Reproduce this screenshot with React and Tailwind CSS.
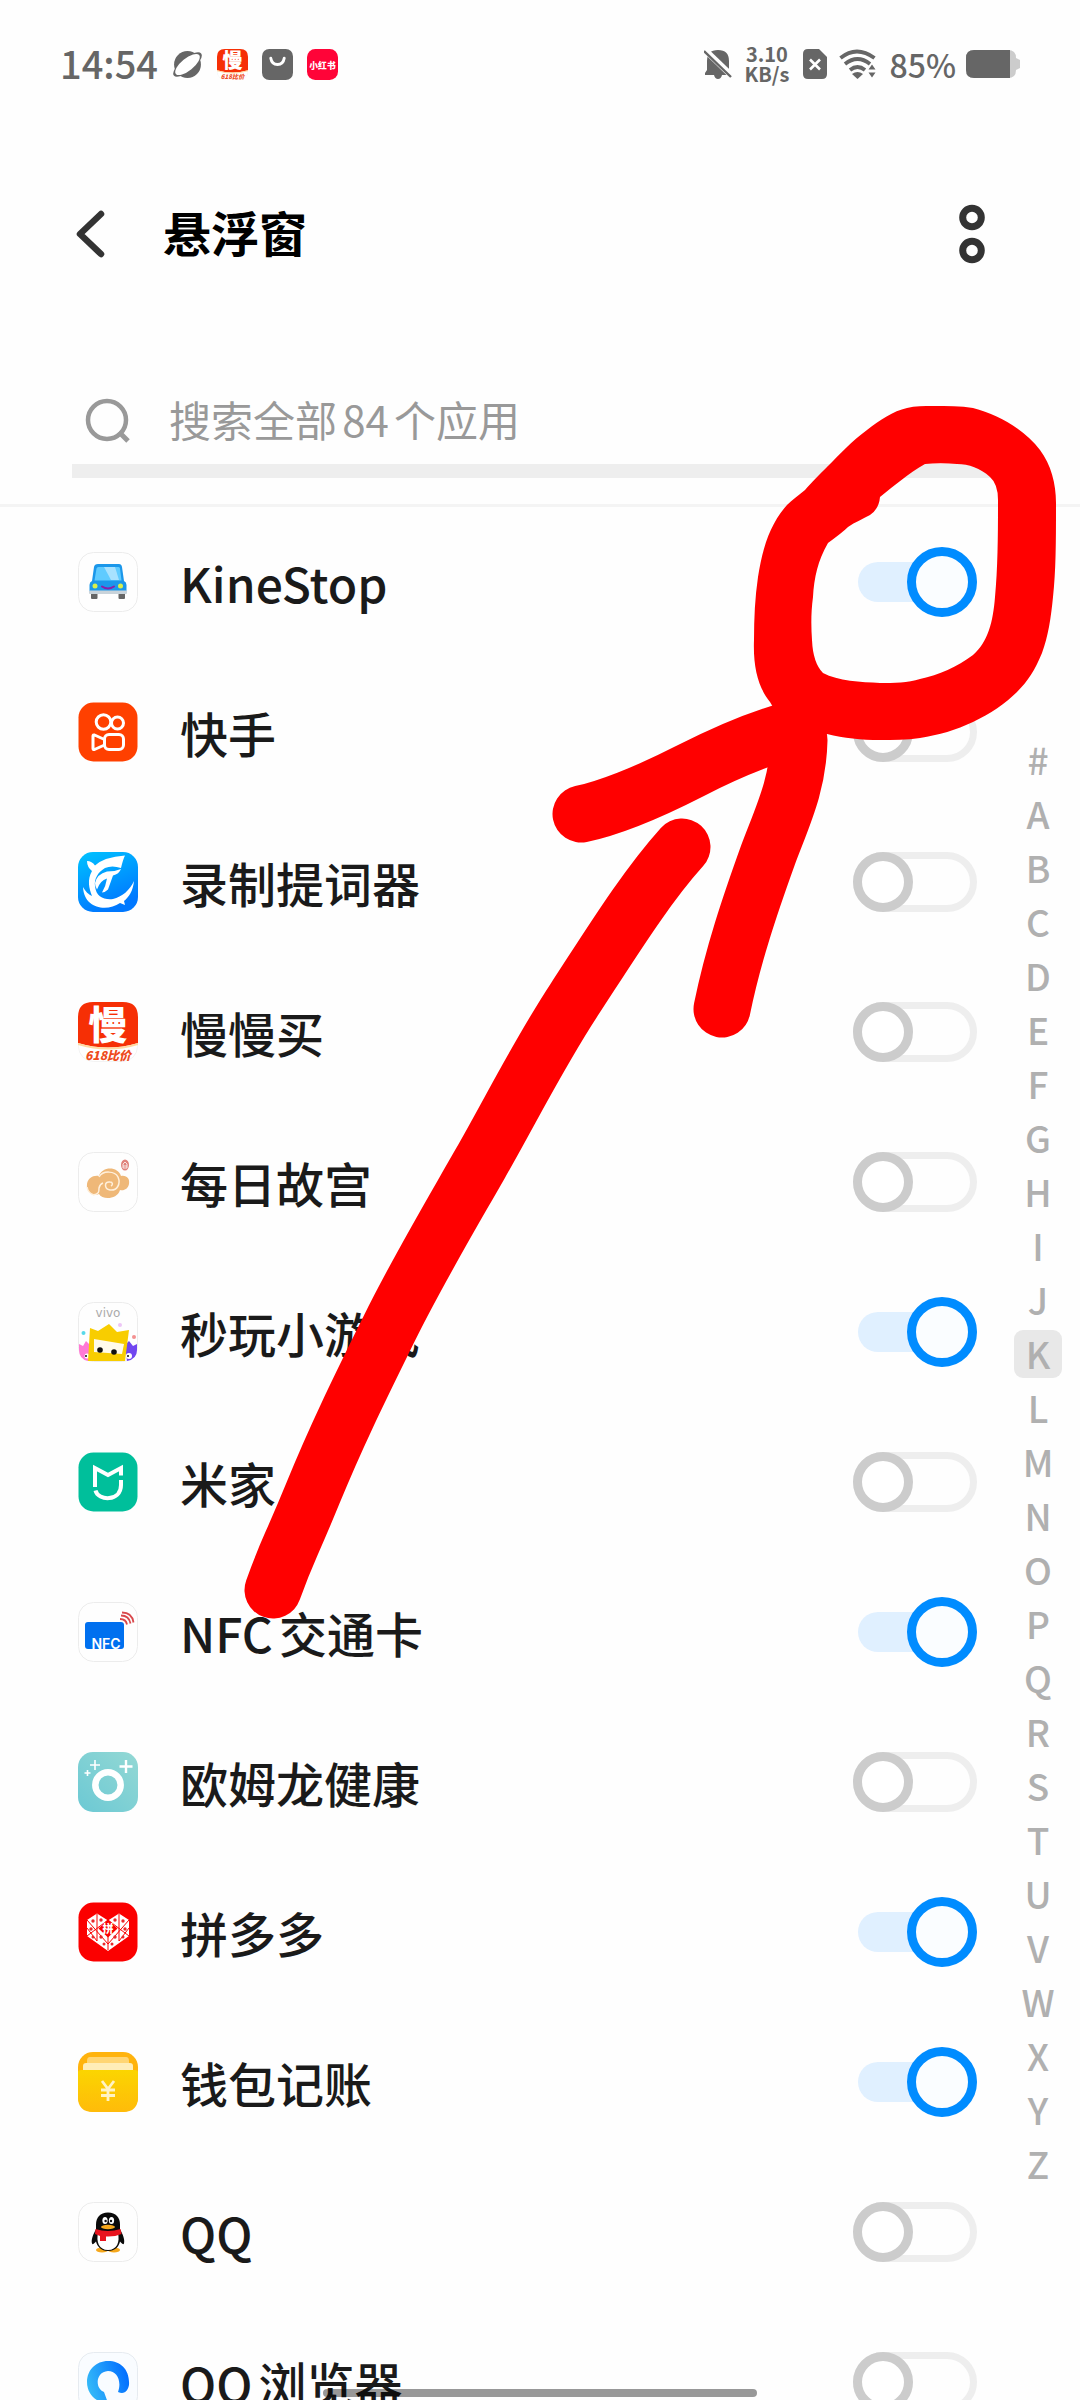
import { useState } from "react";

function Frame({ fill = "#fefefe", plain = true, children }) {
  return (
    <svg viewBox="0 0 60 60" className="size-[60px] shrink-0" aria-hidden="true">
      <rect x="0.5" y="0.5" width="59" height="59" rx="15" fill={fill} stroke={plain ? "#ececec" : "none"} />
      {children}
    </svg>
  );
}

function KineStopIcon() {
  return (
    <Frame>
      <rect x="13" y="41" width="6.5" height="6" rx="1" fill="#666" />
      <rect x="40.5" y="41" width="6.5" height="6" rx="1" fill="#666" />
      <path d="M20 12h21q2.500 0 3 3l2 14q2.500 1 2.500 4v6h-37v-6q0-3 2.500-4l2-14q.500-3 4-3z" fill="#1b97ea" />
      <path d="M20.500 15h20q1.500 0 1.500 1.500l1.500 12h-27l2-12q.200-1.500 2-1.500z" fill="#5fcbff" />
      <path d="M26 15h11l4 13h-8z" fill="#a8e2ff" />
      <rect x="11" y="38.5" width="38" height="3.5" rx="1" fill="#c9d3da" />
      <circle cx="17" cy="34" r="2.5" fill="#d8f04c" />
      <circle cx="42.5" cy="34" r="2.5" fill="#d8f04c" />
      <path d="M24 34.500q6 4 12 0" fill="none" stroke="#8b1fa8" strokeWidth="2" strokeLinecap="round" />
    </Frame>
  );
}

function KuaishouIcon() {
  return (
    <Frame fill="#ff4000" plain={false}>
      <g fill="none" stroke="#fff" strokeWidth="3" strokeLinejoin="round">
        <circle cx="25.5" cy="20" r="7.3" />
        <circle cx="39.5" cy="21" r="6" />
        <rect x="26.5" y="32.5" width="19" height="15" rx="4.5" />
        <path d="M26.500 37.500l-10-4.500q-1.500-.300-1.500 1v12.500q0 1.300 1.500 1l10-4.500" />
      </g>
    </Frame>
  );
}

function PrompterIcon() {
  return (
    <svg viewBox="0 0 60 60" className="size-[60px] shrink-0" aria-hidden="true">
      <defs>
        <linearGradient id="prompter" x1="0" y1="0" x2=".4" y2="1">
          <stop offset="0" stopColor="#00c3ff" />
          <stop offset="1" stopColor="#0078ff" />
        </linearGradient>
      </defs>
      <rect width="60" height="60" rx="15" fill="url(#prompter)" />
      <path d="M9 9q5 0 8 4.500Q26 5 47 3.500q-2 4-4 12.500-9-3-16 0c-7 4-11 11-10 18C18 45 26 48 35 47c9-2 17-9 21-18-1 10-5 16-10 20l1 4-5-2c-13 9-36 6-37-16 3 5 5 7 9 9C11 36 9 28 14 19q-5-4-5-10z" fill="#fff" />
      <path d="M17 31q2-9 12-11.500 8 0 14-2.500-2 5-8 6.500l-5 14q-3 3-6 3 4-7 5-14-7 2-10 11-2-3-2-6.500z" fill="#fff" />
    </svg>
  );
}

function ManmanIcon({ small = false }) {
  return (
    <svg viewBox="0 0 60 60" className={small ? "size-[31px] shrink-0" : "size-[60px] shrink-0"} aria-hidden="true">
      <rect x="0.5" y="0.5" width="59" height="59" rx="15" fill="#fff" stroke="#f3f3f3" />
      <path d="M15 0h30q15 0 15 15v26q-30 9-60 0V15Q0 0 15 0z" fill="#f62f05" />
      <path d="M0 41q30 9 60 0v2q-30 9-60 0z" fill="#ffd9a0" />
      <text x="30" y="37" textAnchor="middle" fontSize="39" fontWeight="900" fill="#fff">慢</text>
      <text x="30" y="58" textAnchor="middle" fontSize="12" fontWeight="900" fontStyle="italic" fill="#ee4b1c">618比价</text>
    </svg>
  );
}

function PalaceIcon() {
  return (
    <Frame>
      <path d="M21 24c3-10 19-10 22 0 6-1 9 3 8 8s-5 7-9 6c-3 10-18 10-21 4C14 45 8 40 9 32c1-6 6-9 12-8z" fill="#efb878" />
      <path d="M21 25c4-7 16-6 19 0 3 7-1 14-8 13-6-1-6-9 0-8 3 0 3 3 1 4M15 43c6-1 6-3 6-7q1-4 4-5M9 35q1 6 7 8" fill="none" stroke="#fff0dc" strokeWidth="1.5" />
      <ellipse cx="47" cy="13" rx="4" ry="5.5" fill="#e0827c" />
      <path d="M45 12l2-2 2 2v4h-4zM45 14h4" fill="none" stroke="#fff" strokeWidth=".8" />
    </Frame>
  );
}

function GameIcon() {
  return (
    <Frame>
      <text x="30" y="15" textAnchor="middle" fontSize="12" fontFamily="DejaVu Sans" fill="#aaa">vivo</text>
      <path d="M1 42l4 2 3-5 4 4-2 16Q1 57 1 48z" fill="#ff79d5" />
      <path d="M59 42l-4 2-4-5-4 4 2 16q10-2 10-11z" fill="#7046f0" />
      <circle cx="9" cy="54" r="2.5" fill="#fff" />
      <circle cx="51" cy="54" r="3" fill="#fff" />
      <circle cx="8" cy="54" r="1" fill="#111" />
      <circle cx="50" cy="54" r="1" fill="#111" />
      <path d="M12 26l8 3 11-7 8 8 12-2-4 31H10z" fill="#f8cd00" />
      <path d="M16 37l30 5-2 10-28-2z" fill="#fffbea" />
      <circle cx="22" cy="48" r="2.8" fill="#111" />
      <circle cx="36" cy="50" r="2.8" fill="#111" />
      <circle cx="5.5" cy="31" r="2" fill="#58d9ea" />
      <circle cx="42" cy="23" r="2" fill="#ecc6f6" />
      <circle cx="56" cy="35" r="2" fill="#f49090" />
    </Frame>
  );
}

function MijiaIcon() {
  return (
    <Frame fill="#00bf9b" plain={false}>
      <path d="M17 35V16l13 7 13-7v7.500" fill="none" stroke="#fff" strokeWidth="4" />
      <path d="M17.500 38.500C20 49 43 50 43 33v-5" fill="none" stroke="#fff" strokeWidth="4" />
    </Frame>
  );
}

function NfcIcon() {
  return (
    <Frame>
      <rect x="7" y="20" width="39" height="27" rx="3" fill="#0070ef" />
      <text x="28" y="47" textAnchor="middle" fontSize="14" fontWeight="600" fontFamily="Inter" fill="#fff">NFC</text>
      <path d="M42 17q6 0 7 5.500M43 13.500q8 0 9.500 8M44 10.500q10 0 11.500 10" fill="none" stroke="#d9484c" strokeWidth="1.8" />
    </Frame>
  );
}

function OmronIcon() {
  return (
    <svg viewBox="0 0 60 60" className="size-[60px] shrink-0" aria-hidden="true">
      <defs>
        <linearGradient id="omron" x1="0" y1="1" x2="1" y2="0">
          <stop offset="0" stopColor="#6cc9d4" />
          <stop offset="1" stopColor="#93d8d4" />
        </linearGradient>
      </defs>
      <rect width="60" height="60" rx="15" fill="url(#omron)" />
      <circle cx="30" cy="33" r="12.7" fill="none" stroke="#fff" strokeWidth="6.5" />
      <path d="M48 8v13M41.500 14.500h13" stroke="#fff" strokeWidth="2.4" />
      <path d="M17 8v10M12 13h10M9.500 18v6M6.500 21h6" stroke="#fff" strokeWidth="1.6" />
    </svg>
  );
}

function PinduoduoIcon() {
  return (
    <Frame fill="#fb0000" plain={false}>
      <path d="M19 11.500l11 7 11-7 10 6.500v16L30 49 9 34V18z" fill="#fff" />
      <path d="M19 12v27M41 12v27M9 18l21 24 21-24M9 34l21-16 21 16M30 18v30M9 26l10 13M51 26L41 39" fill="none" stroke="#fb0000" strokeWidth="1" />
      <path d="M30 17.500l9.500 9-9.500 9-9.500-9z" fill="#fb0000" />
      <text x="30" y="31" textAnchor="middle" fontSize="11" fontWeight="900" fill="#fff">拼</text>
      <g fill="#e9282b">
        <circle cx="15" cy="19" r="1.7" />
        <circle cx="23" cy="18" r="1.7" />
        <circle cx="45" cy="19" r="1.7" />
        <circle cx="37" cy="18" r="1.7" />
        <circle cx="13" cy="27" r="1.7" />
        <circle cx="47" cy="27" r="1.7" />
        <circle cx="15" cy="35" r="1.5" />
        <circle cx="45" cy="35" r="1.5" />
        <circle cx="23" cy="35" r="1.7" />
        <circle cx="37" cy="35" r="1.7" />
        <circle cx="26" cy="42" r="1.5" />
        <circle cx="34" cy="42" r="1.5" />
      </g>
    </Frame>
  );
}

function WalletIcon() {
  return (
    <svg viewBox="0 0 60 60" className="size-[60px] shrink-0" aria-hidden="true">
      <defs>
        <linearGradient id="wallet" x1="0" y1="0" x2="0" y2="1">
          <stop offset="0" stopColor="#fbd500" />
          <stop offset="1" stopColor="#ffbb0a" />
        </linearGradient>
      </defs>
      <rect width="60" height="60" rx="15" fill="#ffb30d" />
      <path d="M12 5h36q3 0 3 4v3H9V9q0-4 3-4z" fill="#ffd573" />
      <rect x="5" y="11" width="50" height="14" rx="3" fill="#ffedb8" />
      <path d="M0 20q0-2 4-2h52q4 0 4 2v25q0 15-15 15H15Q0 60 0 45z" fill="url(#wallet)" />
      <path d="M24 29l6 8 6-8M30 37v12M23 38h14M23 43.500h14" fill="none" stroke="#fff3c4" strokeWidth="2.8" />
    </svg>
  );
}

function QQIcon() {
  return (
    <Frame>
      <ellipse cx="24" cy="48" rx="6" ry="2.5" fill="#f6a81c" />
      <ellipse cx="36" cy="48" rx="6" ry="2.5" fill="#f6a81c" />
      <path d="M30 10.500c8 0 12 5 12 12v5c3 5 5 10 4 14-1 2-3-1-4-2-1 5-5 9.500-12 9.500S19 44 18 39.500c-1 1-3 4-4 2-1-4 1-9 4-14v-5c0-7 4-12 12-12z" fill="#0a0a0a" />
      <path d="M20 31h20c2 9-1 17-10 17s-12-8-10-17z" fill="#fff" />
      <ellipse cx="27" cy="18.5" rx="2.6" ry="3.6" fill="#fff" />
      <ellipse cx="33.5" cy="18.5" rx="2.6" ry="3.6" fill="#fff" />
      <circle cx="27.6" cy="19" r="1.2" fill="#111" />
      <circle cx="33" cy="19" r="1.2" fill="#111" />
      <ellipse cx="30" cy="25" rx="7" ry="2.2" fill="#f6a81c" />
      <path d="M17.500 27q12.500 4 25 0l1 5q-7 3-15.500 2.500v4.500h-6v-5l-5-2z" fill="#e8131d" />
    </Frame>
  );
}

function BrowserIcon() {
  return (
    <svg viewBox="0 0 60 60" className="size-[60px] shrink-0" aria-hidden="true">
      <defs>
        <linearGradient id="browser" x1="0" y1=".6" x2="1" y2=".3">
          <stop offset="0" stopColor="#35baf8" />
          <stop offset="1" stopColor="#006cff" />
        </linearGradient>
      </defs>
      <rect x="0.5" y="0.5" width="59" height="59" rx="15" fill="#f9fcff" stroke="#e6ebf0" />
      <path d="M40 40C47 43 50 38 51 33 52 18 43 9 30 9 18 9 9 18 9 30c0 12 9 21 21 21l-4-11c-9-3-9-20 4-21 9 0 14 10 10 21z" fill="url(#browser)" />
    </svg>
  );
}

const APPS = [
  { name: "KineStop", Icon: KineStopIcon, on: true },
  { name: "快手", Icon: KuaishouIcon, on: false },
  { name: "录制提词器", Icon: PrompterIcon, on: false },
  { name: "慢慢买", Icon: ManmanIcon, on: false },
  { name: "每日故宫", Icon: PalaceIcon, on: false },
  { name: "秒玩小游戏", Icon: GameIcon, on: true },
  { name: "米家", Icon: MijiaIcon, on: false },
  { name: "NFC交通卡", Icon: NfcIcon, on: true },
  { name: "欧姆龙健康", Icon: OmronIcon, on: false },
  { name: "拼多多", Icon: PinduoduoIcon, on: true },
  { name: "钱包记账", Icon: WalletIcon, on: true },
  { name: "QQ", Icon: QQIcon, on: false },
  { name: "QQ浏览器", Icon: BrowserIcon, on: false },
];

const LETTERS = "#ABCDEFGHIJKLMNOPQRSTUVWXYZ".split("");

function StatusBar() {
  return (
    <header className="flex h-32 shrink-0 items-center justify-between px-[60px] text-[#666]">
      <div className="flex items-center gap-[14px]">
        <span className="pb-0.5 text-[38px] leading-[56px] font-medium">14:54</span>
        <svg viewBox="0 0 30 30" className="size-[31px]" aria-hidden="true">
          <circle cx="15" cy="15" r="13" fill="#666" />
          <ellipse cx="15" cy="15" rx="17" ry="6.5" transform="rotate(-39 15 15)" fill="#666" />
          <ellipse cx="15" cy="15" rx="14.5" ry="6" transform="rotate(-39 15 15)" fill="#fff" />
        </svg>
        <ManmanIcon small />
        <svg viewBox="0 0 30 30" className="size-[31px]" aria-hidden="true">
          <rect width="30" height="30" rx="7" fill="#666" />
          <path d="M8.500 9q1 6 6.500 6t6.500-6" fill="none" stroke="#fff" strokeWidth="2.8" strokeLinecap="round" />
        </svg>
        <svg viewBox="0 0 30 30" className="size-[31px]" aria-hidden="true">
          <rect width="30" height="30" rx="8" fill="#ff0438" />
          <text x="15" y="19" textAnchor="middle" fontSize="8.5" fontWeight="900" fill="#fff">小红书</text>
        </svg>
      </div>
      <div className="flex items-center">
        <svg viewBox="0 0 28 32" className="mr-3 h-8 w-7" aria-hidden="true">
          <path d="M14 2q11 0 11 11v9l2 3v2h-9q-1 4-4 4t-4-4H1v-2l2-3v-9Q3 2 14 2z" fill="#666" />
          <path d="M0 1l29 28" stroke="#fefefe" strokeWidth="6" />
          <path d="M0 3l27 26" stroke="#666" strokeWidth="2.4" />
        </svg>
        <div className="mr-[14px] flex flex-col text-center text-[20px] leading-5 font-bold">
          <span>3.10</span>
          <span>KB/s</span>
        </div>
        <svg viewBox="0 0 24 30" className="mr-3 h-[30px] w-6" aria-hidden="true">
          <path d="M5 0h11l8 8v17q0 5-5 5H5q-5 0-5-5V5q0-5 5-5z" fill="#666" />
          <path d="M7 10.500l10 10M17 10.500l-10 10" stroke="#fff" strokeWidth="2.6" />
        </svg>
        <svg viewBox="0 0 38 30" className="mr-3 h-[30px] w-[38px]" aria-hidden="true">
          <g fill="none" stroke="#666" strokeWidth="3.8">
            <path d="M1.500 9q16-13 34 0" />
            <path d="M6 15q12.500-10 25 0" />
            <path d="M11 21q7.500-6 15 0" />
          </g>
          <path d="M13 25q5.500-4 11 0l-5.500 5z" fill="#666" />
          <path d="M29.500 20.500h7l-3.500-5zM29.500 23.500h7l-3.500 5z" fill="#666" />
        </svg>
        <span className="mr-[10px] text-[32px] leading-[48px] font-medium">85%</span>
        <svg viewBox="0 0 54 28" className="h-7 w-[54px]" aria-hidden="true">
          <path d="M8 0h34q8 0 8 8l4 2v8l-4 2q0 8-8 8H8q-8 0-8-8V8q0-8 8-8z" fill="#ccc" />
          <path d="M8 0h36v28H8q-8 0-8-8V8q0-8 8-8z" fill="#666" />
        </svg>
      </div>
    </header>
  );
}

function AppRow({ app }) {
  const { Icon } = app;
  return (
    <li>
      <label className="flex h-[150px] items-center">
        <Icon />
        <span className="ml-[42px] flex-1 text-[48px] leading-[56px] font-medium text-[#1a1a1a] [text-autospace:normal]">{app.name}</span>
        <span className="relative flex h-[70px] w-[124px] items-center">
          <input type="checkbox" role="switch" defaultChecked={app.on} className="peer absolute inset-0 m-0 opacity-0" />
          <span className="h-[60px] w-full rounded-full border-[7px] border-[#eee] peer-checked:ml-[5px] peer-checked:h-10 peer-checked:border-0 peer-checked:bg-[#e0f0ff]" />
          <span className="absolute left-0 size-[60px] rounded-full border-[9px] border-[#ccc] bg-white peer-checked:right-0 peer-checked:left-auto peer-checked:size-[70px] peer-checked:border-[#008cff] peer-checked:bg-[#fafdff]" />
        </span>
      </label>
    </li>
  );
}

// Freehand circle and arrow drawn over the list.
function Markup() {
  return (
    <svg width="1080" height="2400" viewBox="0 0 1080 2400" className="pointer-events-none absolute top-0 left-0" aria-hidden="true">
      <path
        fillRule="evenodd"
        fill="#f00"
        d="M770 702C758 687 753 667 754 640C754 618 755 597 758 577C763 545 771 523 787 505C792 500 799 495 805 490C811 483 820 474 827 467C840 454 852 441 867 430C880 420 893 411 907 408C915 406 924 406 933 406C947 406 961 406 973 408C1000 415 1026 431 1040 450C1051 465 1056 483 1056 503C1056 540 1056 570 1053 597C1051 618 1048 637 1042 653C1035 670 1028 681 1017 692C1006 703 990 714 973 722C956 730 939 735 920 738C907 740 893 740 880 740C861 740 844 738 827 734Q790 740 770 702Z
        M925 464C909 473 895 485 880 497Q879 509 870 515C863 519 855 522 848 527Q843 532 828 543C818 560 814 578 813 597C811 612 811 626 812 640Q813 663 823 673C838 681 861 682 880 683C894 683 908 683 920 679C939 675 957 667 973 655C988 642 993 622 995 597C998 566 998 530 998 500Q998 484 990 477C980 468 969 464 957 464C946 463 935 463 925 464Z"
      />
      <g fill="none" stroke="#f00" strokeWidth="57" strokeLinecap="round" strokeLinejoin="round">
        <path d="M581 814C605 809 645 794 690 771S770 735 798 728" />
        <path d="M722 1009C733 955 750 905 768 855C783 815 798 785 799 740" />
        <path d="M682 847C645 888 610 945 574 1000S512 1108 480 1164S417 1272 389 1329S338 1432 313 1493S288 1548 273 1590" />
      </g>
    </svg>
  );
}

export default function App() {
  const [current, setCurrent] = useState("K");
  return (
    <div lang="zh-CN" className='relative flex h-screen flex-col overflow-hidden bg-[#fefefe] font-["Noto_Sans_CJK_SC",sans-serif]'>
      <StatusBar />
      <nav className="flex h-[212px] shrink-0 items-center pr-[90px] pl-[72px]">
        <button type="button" aria-label="返回" className="mr-[43px]">
          <svg viewBox="0 0 48 48" className="size-12" aria-hidden="true">
            <path d="M29 4L8 24l21 20" fill="none" stroke="#333" strokeWidth="6.5" strokeLinecap="round" strokeLinejoin="round" />
          </svg>
        </button>
        <h1 className="flex-1 pb-1.5 text-[48px] leading-[56px] font-bold text-black">悬浮窗</h1>
        <button type="button" aria-label="更多">
          <svg viewBox="0 0 36 60" className="h-[60px] w-9" aria-hidden="true">
            <circle cx="18" cy="13.5" r="9.3" fill="none" stroke="#333" strokeWidth="7" />
            <circle cx="18" cy="46.5" r="9.3" fill="none" stroke="#333" strokeWidth="7" />
          </svg>
        </button>
      </nav>
      <label className="mx-[72px] mt-[38px] flex h-[100px] shrink-0 items-center border-b-[14px] border-[#eee] pl-[13px]">
        <svg viewBox="0 0 46 46" className="mr-[38px] size-[46px]" aria-hidden="true">
          <circle cx="22" cy="22" r="19" fill="none" stroke="#999" strokeWidth="4.5" />
          <path d="M34 34l9 9" stroke="#999" strokeWidth="5" />
        </svg>
        <input type="search" aria-label="搜索" placeholder="搜索全部84个应用" className="min-w-0 flex-1 bg-transparent pb-1 text-[42px] leading-[56px] outline-none [text-autospace:normal] placeholder:text-[#999]" />
      </label>
      <main className="mt-[26px] flex min-h-0 flex-1 border-t-[3px] border-[#f4f4f4]">
        <ul className="min-w-0 flex-1 pl-[78px]">
          {APPS.map((app) => (
            <AppRow key={app.name} app={app} />
          ))}
        </ul>
        <div className="mt-[226px] mr-[18px] ml-[37px] flex w-12 flex-col text-[37px] leading-[46px] font-medium text-[#b0b0b0]">
          {LETTERS.map((letter) => (
            <button
              key={letter}
              type="button"
              onClick={() => setCurrent(letter)}
              className={letter === current ? "my-[3px] h-12 rounded-[9px] bg-[#e8e8e8] pb-0.5" : "my-[3px] h-12 rounded-[9px] pb-0.5"}
            >
              {letter}
            </button>
          ))}
        </div>
      </main>
      <div className="absolute bottom-[3px] left-1/2 h-2 w-[434px] -translate-x-1/2 rounded-full bg-black/40" />
      <Markup />
    </div>
  );
}
